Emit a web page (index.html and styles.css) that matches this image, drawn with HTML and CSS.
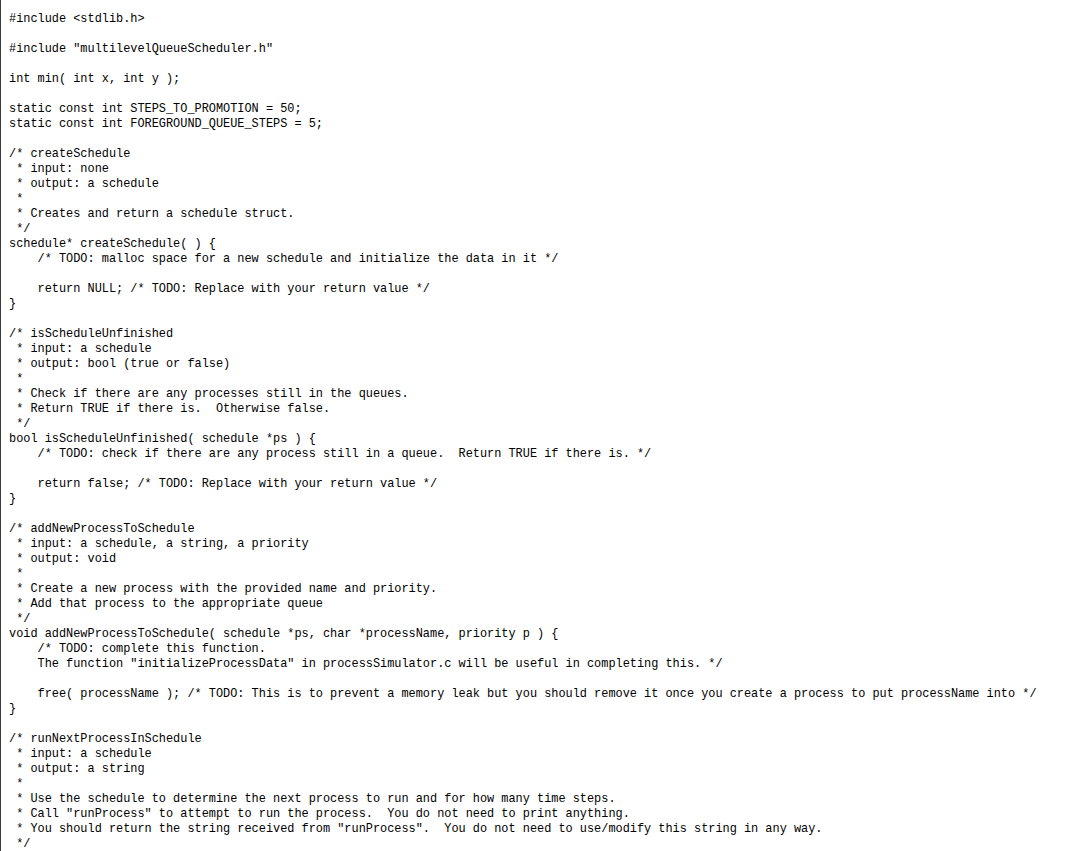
FILE: index.html
```html
<!DOCTYPE html>
<html>
<head>
<meta charset="utf-8">
<link rel="stylesheet" href="styles.css">
</head>
<body>
<div class="frame"><pre class="code">#include &lt;stdlib.h&gt;

#include "multilevelQueueScheduler.h"

int min( int x, int y );

static const int STEPS_TO_PROMOTION = 50;
static const int FOREGROUND_QUEUE_STEPS = 5;

/* createSchedule
 * input: none
 * output: a schedule
 *
 * Creates and return a schedule struct.
 */
schedule* createSchedule( ) {
    /* TODO: malloc space for a new schedule and initialize the data in it */

    return NULL; /* TODO: Replace with your return value */
}

/* isScheduleUnfinished
 * input: a schedule
 * output: bool (true or false)
 *
 * Check if there are any processes still in the queues.
 * Return TRUE if there is.  Otherwise false.
 */
bool isScheduleUnfinished( schedule *ps ) {
    /* TODO: check if there are any process still in a queue.  Return TRUE if there is. */

    return false; /* TODO: Replace with your return value */
}

/* addNewProcessToSchedule
 * input: a schedule, a string, a priority
 * output: void
 *
 * Create a new process with the provided name and priority.
 * Add that process to the appropriate queue
 */
void addNewProcessToSchedule( schedule *ps, char *processName, priority p ) {
    /* TODO: complete this function.
    The function "initializeProcessData" in processSimulator.c will be useful in completing this. */

    free( processName ); /* TODO: This is to prevent a memory leak but you should remove it once you create a process to put processName into */
}

/* runNextProcessInSchedule
 * input: a schedule
 * output: a string
 *
 * Use the schedule to determine the next process to run and for how many time steps.
 * Call "runProcess" to attempt to run the process.  You do not need to print anything.
 * You should return the string received from "runProcess".  You do not need to use/modify this string in any way.
 */
</pre></div>
</body>
</html>
```
FILE: styles.css
```css
html, body {
  margin: 0;
  padding: 0;
  background: #ffffff;
  overflow: hidden;
}

.frame {
  border-left: 1px solid #3c3c3c;
  min-height: 851px;
  box-sizing: border-box;
  padding: 12px 0 0 8px;
}

.code {
  margin: 0;
  font-family: "Liberation Mono", "DejaVu Sans Mono", monospace;
  font-size: 11.9px;
  line-height: 15px;
  color: #000000;
  white-space: pre;
}
```
